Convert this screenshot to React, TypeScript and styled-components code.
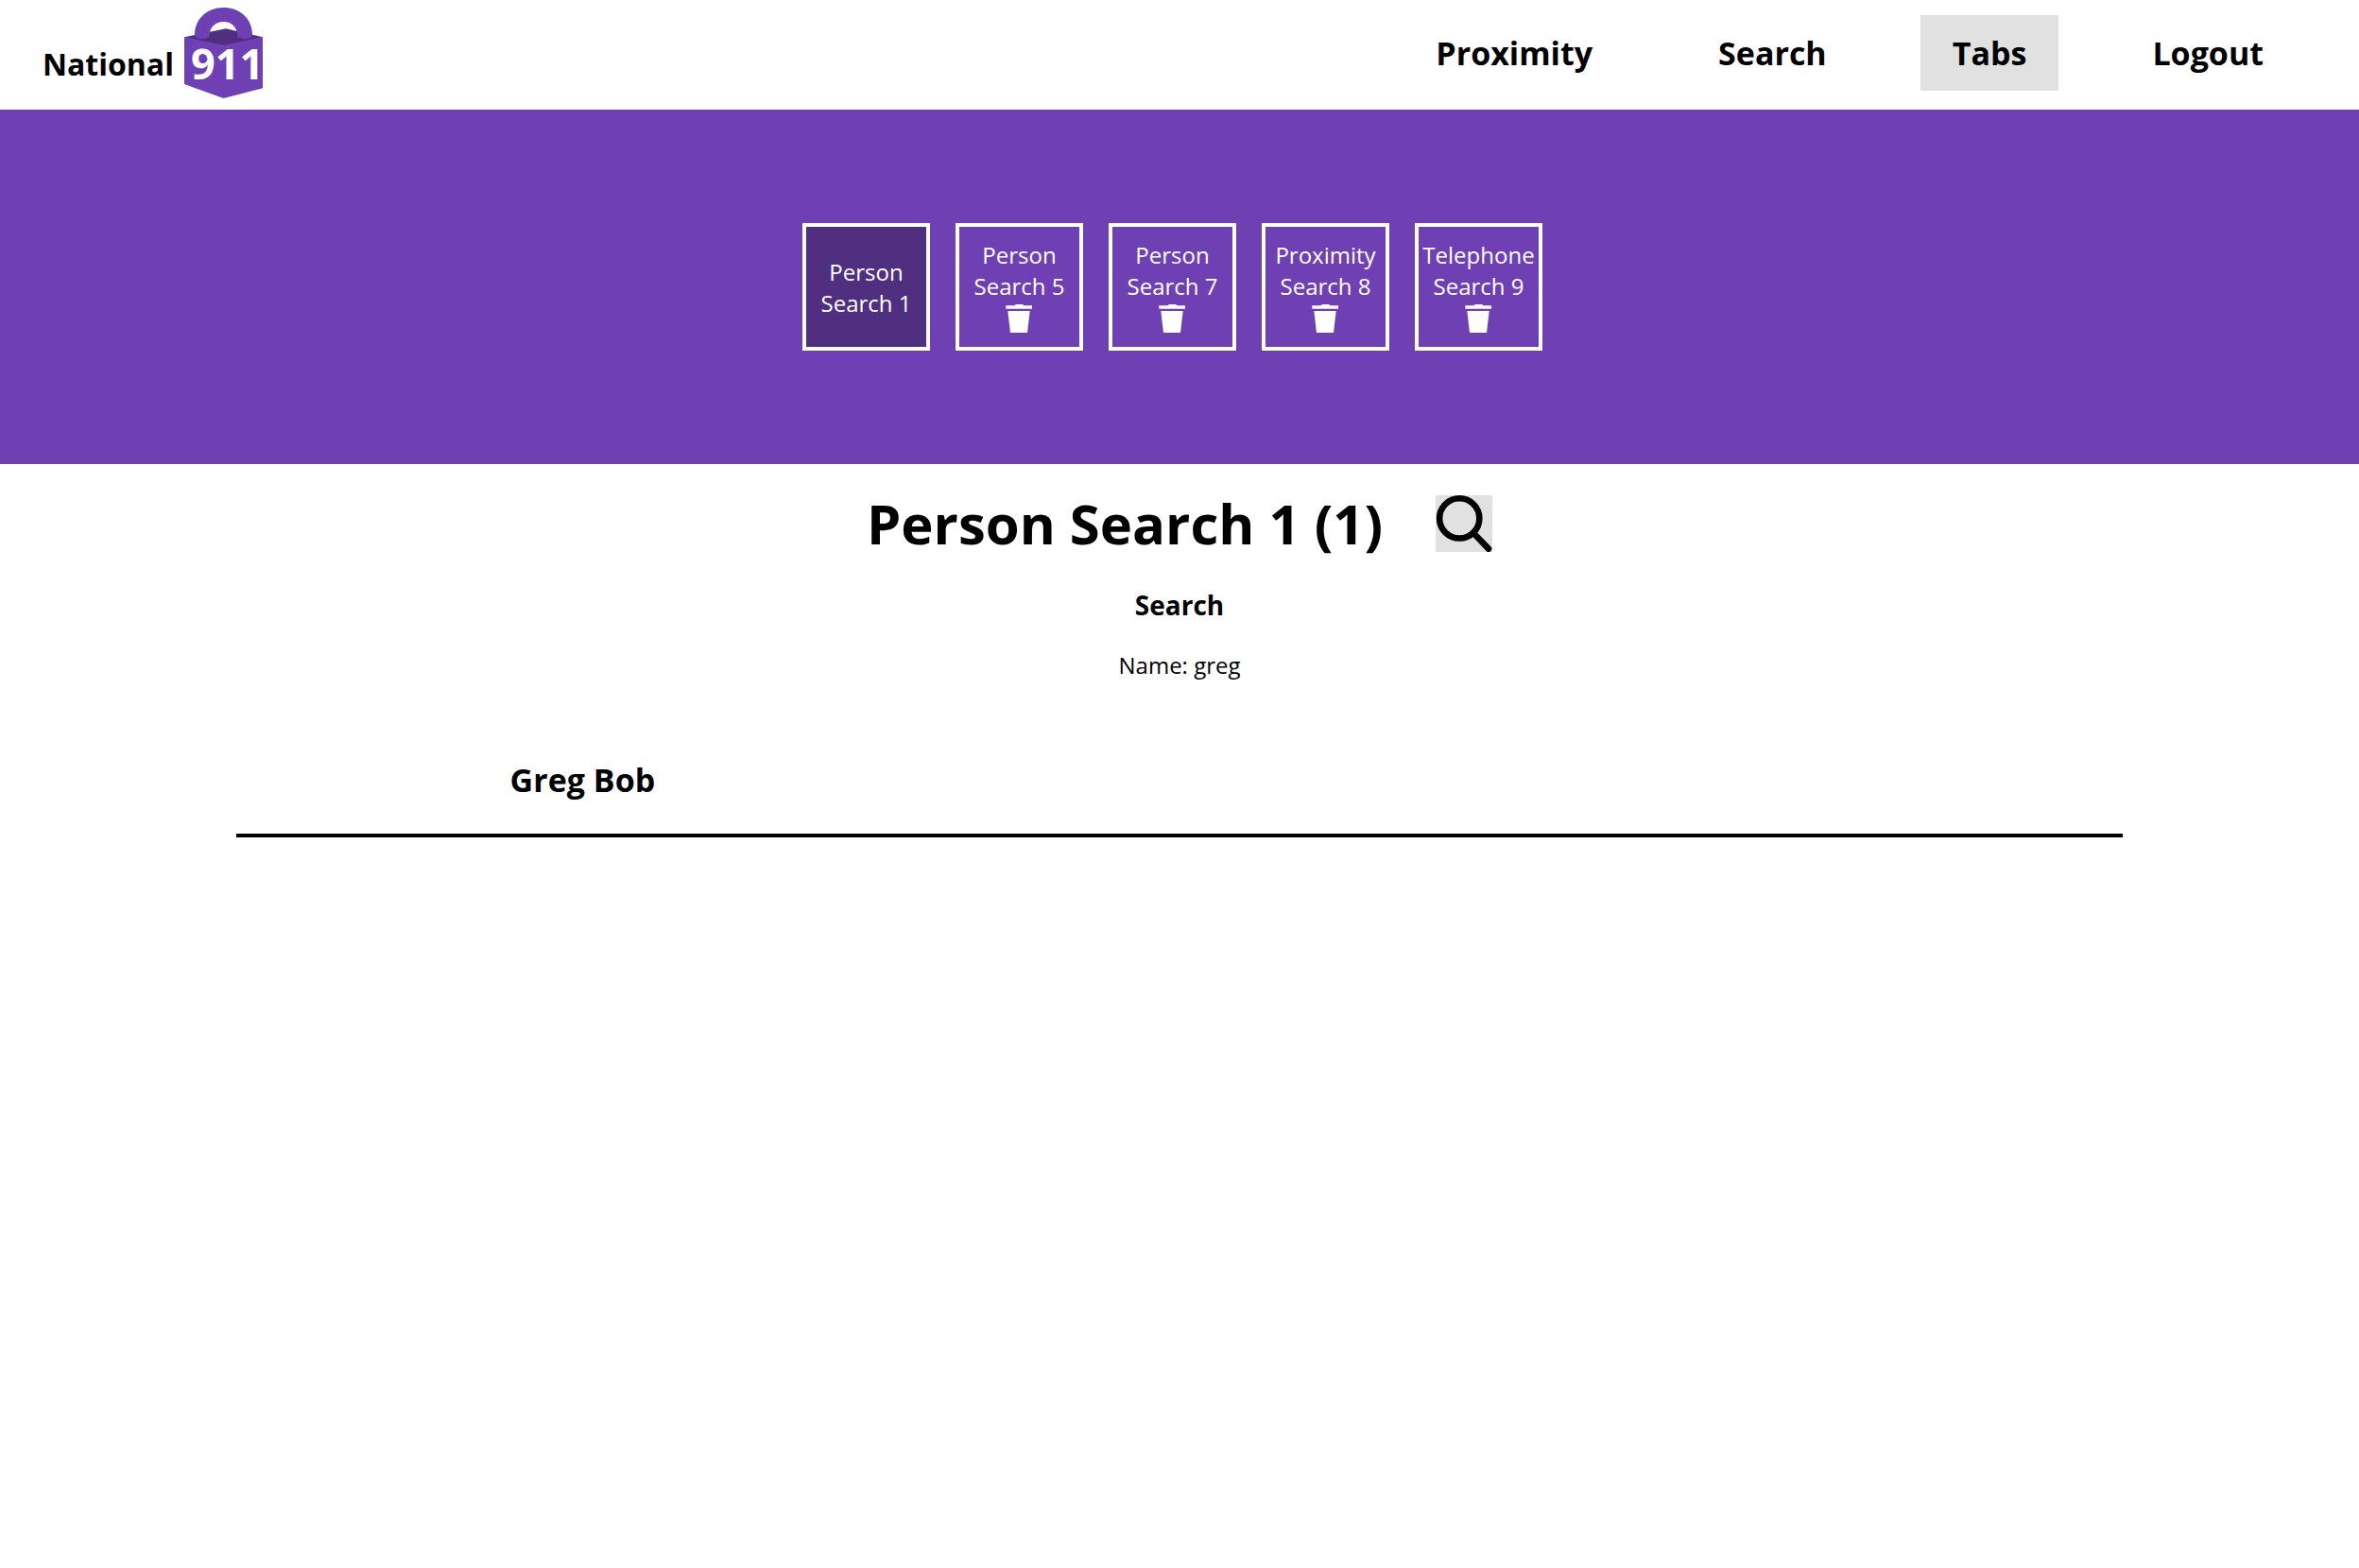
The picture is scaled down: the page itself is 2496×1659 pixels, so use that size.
import React from "react";
import styled, { createGlobalStyle } from "styled-components";

const purple = "#6f3fb4";
const darkPurple = "#512f80";
const grey = "#e1e1e1";

const GlobalStyle = createGlobalStyle`
  *, *::before, *::after { box-sizing: border-box; }
  body {
    margin: 0;
    background: #fff;
    color: #000;
    font-family: "Open Sans", sans-serif;
    font-size: 24px;
    line-height: 33px;
  }
  h1, h2, h3, p, ul { margin: 0; padding: 0; }
  ul { list-style: none; }
  button {
    border: 0;
    padding: 0;
    background: none;
    color: inherit;
    font: inherit;
    cursor: pointer;
  }
`;

const Header = styled.header`
  display: flex;
  justify-content: space-between;
  align-items: center;
  padding: 8px 67px 12px 45px;
`;

const Brand = styled.a`
  display: flex;
  align-items: flex-end;
  gap: 11px;
  color: inherit;
  text-decoration: none;
`;

const BrandName = styled.span`
  padding-bottom: 13px;
  font-size: 32px;
  font-weight: 700;
  line-height: 46px;
`;

const LogoMark = styled.svg`
  display: block;
  width: 83px;
  height: 96px;
`;

const LogoDigits = styled.text`
  fill: #fff;
  font-size: 45px;
  font-weight: 700;
`;

const Nav = styled.nav`
  display: flex;
  gap: 65px;
`;

const NavLink = styled.a<{ $active?: boolean }>`
  padding: 17px 34px;
  background: ${({ $active }) => ($active ? grey : "transparent")};
  color: inherit;
  font-size: 34px;
  font-weight: 700;
  line-height: 46px;
  text-decoration: none;
`;

const TabStrip = styled.section`
  padding: 120px 15px 120px 0;
  background: ${purple};
  color: #fff;
`;

const TabList = styled.ul`
  display: flex;
  flex-wrap: wrap;
  justify-content: center;
  gap: 27px;
`;

const Tab = styled.li<{ $active?: boolean }>`
  display: flex;
  flex-direction: column;
  align-items: center;
  justify-content: center;
  width: 135px;
  height: 135px;
  border: 4px solid #fff;
  background: ${({ $active }) => ($active ? darkPurple : "transparent")};
`;

const TabLabel = styled.button`
  width: 100%;
  text-align: center;
`;

const DeleteButton = styled.button`
  display: block;
  height: 35px;
`;

const TrashIcon = styled.svg`
  display: block;
  width: 35px;
  height: 35px;
  fill: #fff;
`;

const Main = styled.main`
  display: flex;
  flex-direction: column;
  align-items: center;
  gap: 28px;
  padding-top: 23px;
`;

const TitleRow = styled.div`
  display: flex;
  align-items: center;
  gap: 56px;
`;

const Title = styled.h1`
  font-size: 58px;
  font-weight: 700;
  line-height: 79px;
`;

const SearchButton = styled.button`
  display: block;
  width: 60px;
  height: 60px;
  background: ${grey};
`;

const SearchIcon = styled.svg`
  display: block;
  width: 60px;
  height: 60px;
  fill: none;
  stroke: #000;
  stroke-width: 6.6;
  stroke-linecap: round;
`;

const Subtitle = styled.h2`
  font-size: 28px;
  font-weight: 700;
  line-height: 38px;
`;

const Results = styled.ul`
  width: 80%;
  margin-top: 20px;
`;

const Result = styled.li`
  padding: 34px 290px;
  border-bottom: 4px solid #000;
`;

const ResultName = styled.h3`
  font-size: 34px;
  font-weight: 700;
  line-height: 46px;
`;

const navItems = ["Proximity", "Search", "Tabs", "Logout"];

const tabs = [
  { kind: "Person", number: 1 },
  { kind: "Person", number: 5 },
  { kind: "Person", number: 7 },
  { kind: "Proximity", number: 8 },
  { kind: "Telephone", number: 9 },
];

function Logo() {
  return (
    <LogoMark viewBox="0 0 83 96" role="img" aria-label="911">
      <path fill={purple} d="M0 31.3H83V85.3L41.5 96L0 81Z" />
      <path fill={darkPurple} d="M0 31.3L44 22.3L83 31.3L41.7 39.7Z" />
      <path
        fill={purple}
        d="M11 29C11 12 24 0 41.5 0S72 12 72 29C72 34.5 56 34.5 56 29C56 21 50 15 41.5 15S26.7 21 26.7 29C26.7 34.5 11 34.5 11 29Z"
      />
      <LogoDigits x="7" y="76">911</LogoDigits>
    </LogoMark>
  );
}

export default function App() {
  return (
    <>
      <GlobalStyle />
      <Header>
        <Brand href="#">
          <BrandName>National</BrandName>
          <Logo />
        </Brand>
        <Nav>
          {navItems.map((item) => (
            <NavLink key={item} href="#" $active={item === "Tabs"}>
              {item}
            </NavLink>
          ))}
        </Nav>
      </Header>
      <TabStrip>
        <TabList>
          {tabs.map(({ kind, number }, index) => (
            <Tab key={number} $active={index === 0}>
              <TabLabel>
                {kind}
                <br />
                Search {number}
              </TabLabel>
              {index > 0 && (
                <DeleteButton aria-label={`Delete ${kind} Search ${number}`}>
                  <TrashIcon viewBox="0 0 35 35" aria-hidden="true">
                    <path d="M3.3 4.3H12.5L14 3H21L22.5 4.3H31V7.8H3.3Z" />
                    <path d="M5.3 10H28.7L26 33H8Z" />
                  </TrashIcon>
                </DeleteButton>
              )}
            </Tab>
          ))}
        </TabList>
      </TabStrip>
      <Main>
        <TitleRow>
          <Title>Person Search 1 (1)</Title>
          <SearchButton aria-label="Search">
            <SearchIcon viewBox="0 0 60 60" aria-hidden="true">
              <circle cx="25.2" cy="24.4" r="21.1" />
              <path d="M41 41L56 56.6" />
            </SearchIcon>
          </SearchButton>
        </TitleRow>
        <Subtitle>Search</Subtitle>
        <p>Name: greg</p>
        <Results>
          <Result>
            <ResultName>Greg Bob</ResultName>
          </Result>
        </Results>
      </Main>
    </>
  );
}
